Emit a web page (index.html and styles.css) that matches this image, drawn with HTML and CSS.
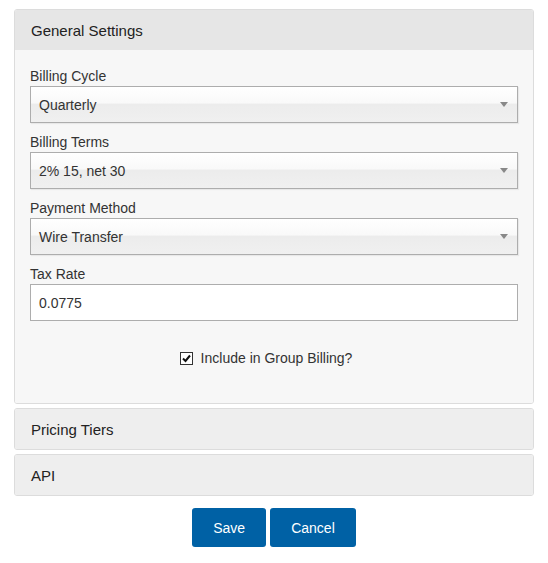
FILE: index.html
```html
<!DOCTYPE html>
<html>
<head>
<meta charset="utf-8">
<link rel="stylesheet" href="styles.css">
</head>
<body>
<div class="page">
  <div class="panel">
    <div class="panel-heading open">General Settings</div>
    <div class="panel-body">
      <div class="group">
        <label class="lbl">Billing Cycle</label>
        <div class="select"><span>Quarterly</span><i class="caret"></i></div>
      </div>
      <div class="group">
        <label class="lbl">Billing Terms</label>
        <div class="select"><span>2% 15, net 30</span><i class="caret"></i></div>
      </div>
      <div class="group">
        <label class="lbl">Payment Method</label>
        <div class="select"><span>Wire Transfer</span><i class="caret"></i></div>
      </div>
      <div class="group">
        <label class="lbl">Tax Rate</label>
        <div class="input">0.0775</div>
      </div>
      <div class="check-row">
        <svg class="chk" width="13" height="13" viewBox="0 0 13 13">
          <rect x="0.5" y="0.5" width="12" height="12" fill="#fff" stroke="#333"/>
          <path d="M3 6.5 L5.5 9 L10 3.5" fill="none" stroke="#111" stroke-width="2"/>
        </svg>
        <span>Include in Group Billing?</span>
      </div>
    </div>
  </div>
  <div class="panel">
    <div class="panel-heading">Pricing Tiers</div>
  </div>
  <div class="panel">
    <div class="panel-heading">API</div>
  </div>
  <div class="actions">
    <button class="btn">Save</button>
    <button class="btn">Cancel</button>
  </div>
</div>
</body>
</html>
```

FILE: styles.css
```css
html, body {
  margin: 0;
  padding: 0;
  background: #fff;
}
body {
  font-family: "Liberation Sans", Arial, sans-serif;
  color: #333;
  font-size: 14px;
}
.page {
  padding: 9px 14px 0;
  display: flex;
  flex-direction: column;
  gap: 4px;
}
.panel {
  border: 1px solid #dcdcdc;
  border-radius: 3px;
  overflow: hidden;
}
.panel-heading {
  height: 40px;
  display: flex;
  align-items: center;
  padding-left: 16px;
  font-size: 15px;
  color: #222;
  background: #eeeeee;
}
.panel-heading.open {
  background: #e6e6e6;
}
.panel-body {
  background: #f7f7f7;
  padding: 16px 15px 35px;
}
.group {
  margin-bottom: 9px;
}
.group:last-of-type {
  margin-bottom: 0;
}
.lbl {
  display: block;
  line-height: 20px;
  font-size: 14px;
  color: #333;
}
.select, .input {
  box-sizing: border-box;
  height: 37px;
  border: 1px solid #adadad;
  display: flex;
  align-items: center;
  padding: 0 8px;
  font-size: 14px;
  color: #333;
}
.select {
  position: relative;
  background: linear-gradient(to bottom, #ffffff 0%, #f9f9f9 45%, #ececec 50%, #f0f0f0 100%);
  box-shadow: 1px 1px 1px rgba(0,0,0,0.06);
}
.input {
  background: #fff;
}
.caret {
  position: absolute;
  right: 9px;
  top: 15px;
  width: 0;
  height: 0;
  border-left: 4px solid transparent;
  border-right: 4px solid transparent;
  border-top: 5px solid #888;
}
.check-row {
  margin-top: 27px;
  height: 20px;
  display: flex;
  align-items: center;
  justify-content: center;
  gap: 8px;
  padding-right: 16px;
}
.chk {
  display: block;
  flex: none;
}
.actions {
  margin-top: 8px;
  display: flex;
  justify-content: center;
  gap: 4px;
}
.btn {
  height: 39px;
  padding: 0 21px;
  border: none;
  border-radius: 3px;
  background: #0061a5;
  color: #fff;
  font-family: "Liberation Sans", Arial, sans-serif;
  font-size: 14px;
}
```
